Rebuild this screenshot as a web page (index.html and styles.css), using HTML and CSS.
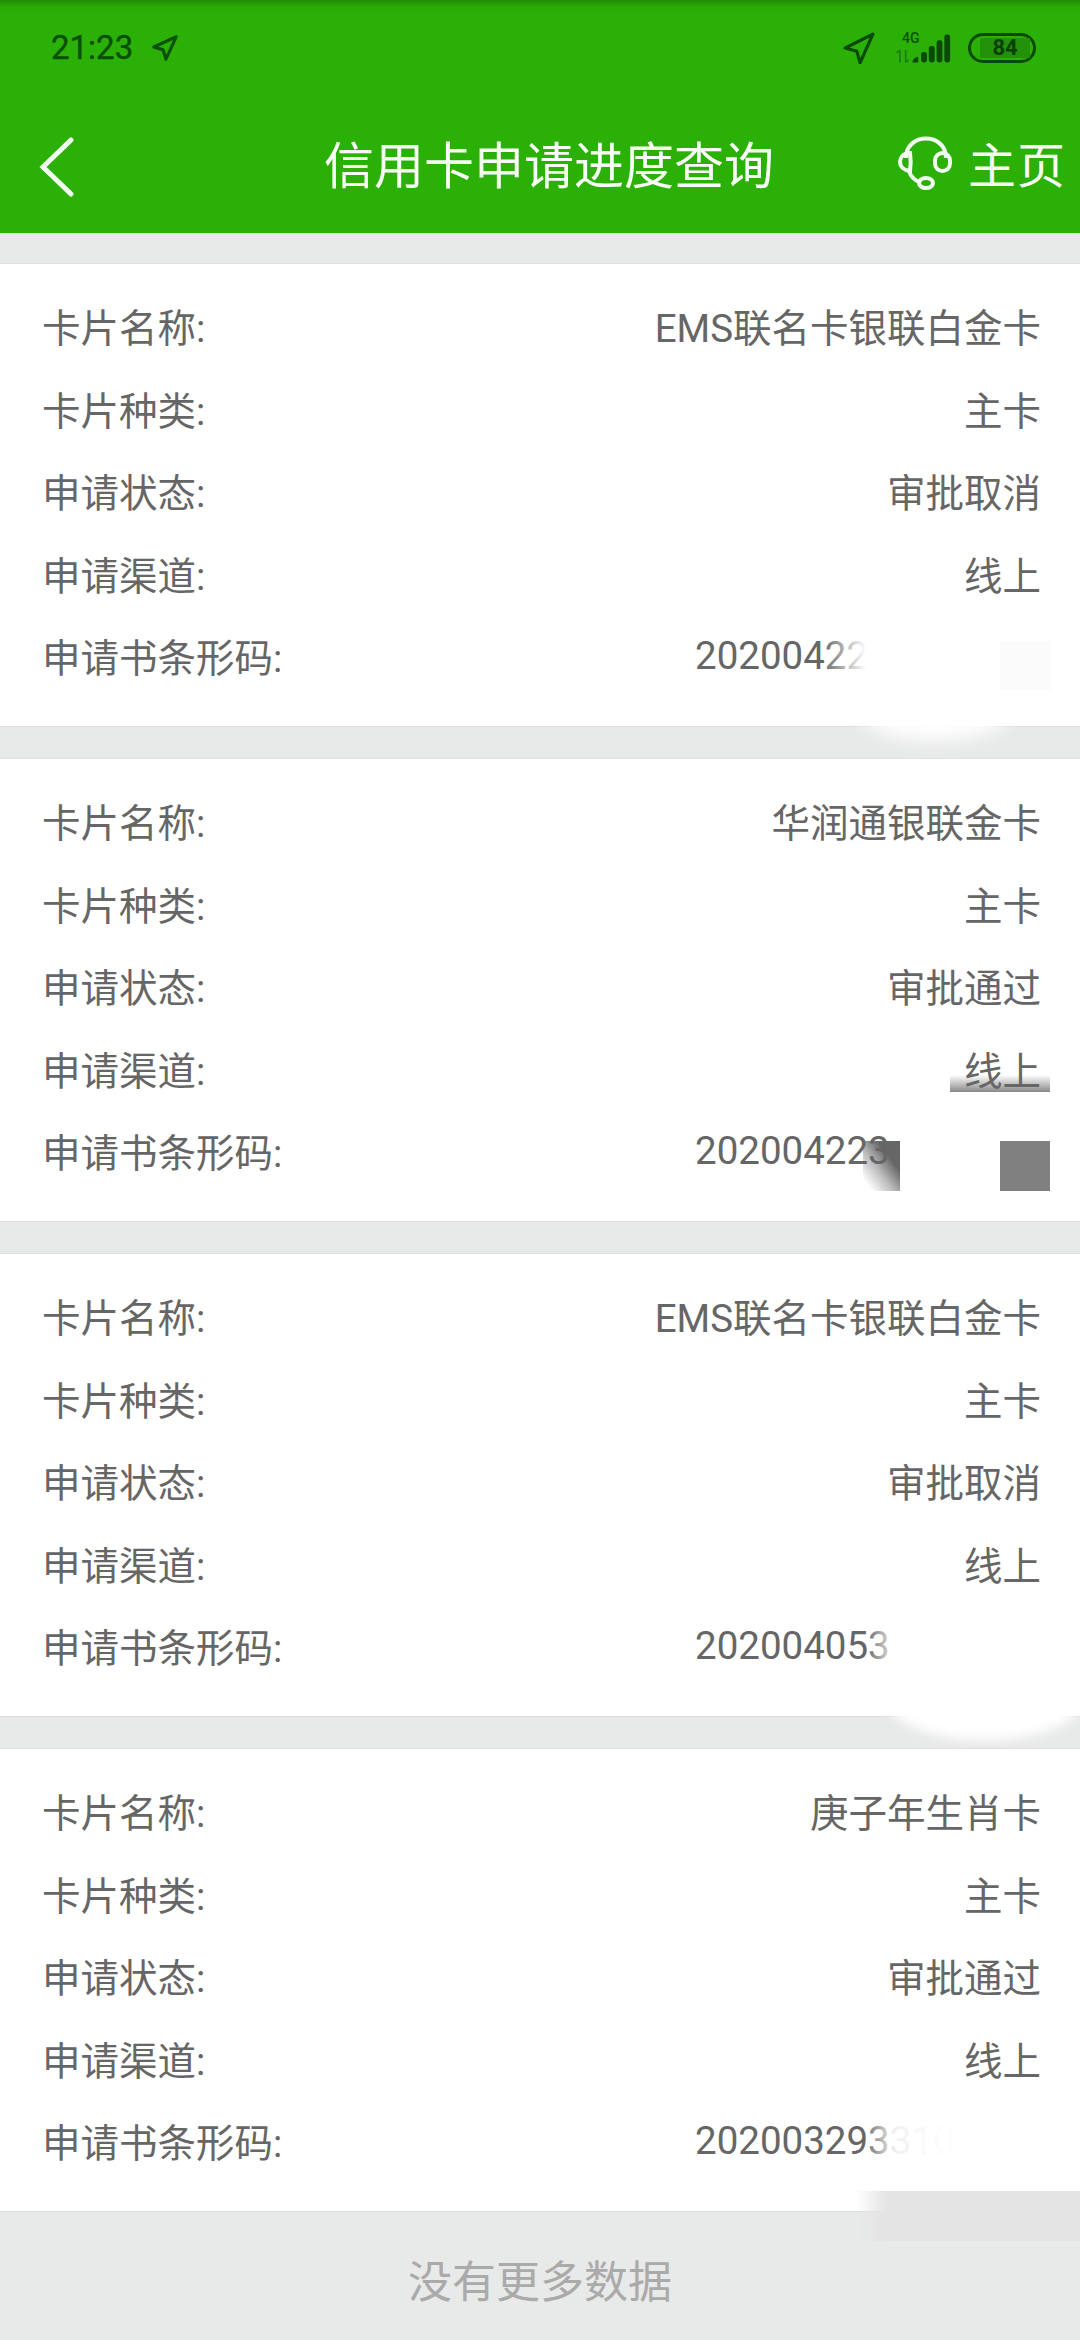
FILE: index.html
```html
<!DOCTYPE html>
<html lang="zh-CN">
<head>
<meta charset="utf-8">
<title>信用卡申请进度查询</title>
<link rel="stylesheet" href="styles.css">
</head>
<body>
<header class="top">
  <div class="status">
    <div class="status-left">
      <span class="time">21:23</span>
      <svg class="loc-small" viewBox="0 0 30 30"><path d="M27 3 L3 14 L13 17 L16 27 Z" fill="none" stroke="#0a5206" stroke-width="3.4" stroke-linejoin="round"/></svg>
    </div>
    <div class="status-right">
      <svg class="loc" viewBox="0 0 30 30"><path d="M28 2 L2 15 L13 18 L16 29 Z" fill="none" stroke="#0a4a06" stroke-width="3" stroke-linejoin="round"/></svg>
      <div class="net">
        <span class="net-label">4G</span>
        <svg class="signal" viewBox="0 0 60 30"><path d="M4 16 V29 M1 19 L4 16 M10 29 V16 M13 26 L10 29" stroke="#1a7a10" stroke-width="1.6" fill="none"/><path d="M17 29 Q17 24 23 23 V29 Z" fill="#0a4a06"/><rect x="26" y="18" width="6" height="11" rx="2.5" fill="#0a4a06"/><rect x="34" y="12" width="6" height="17" rx="2.5" fill="#0a4a06"/><rect x="42" y="6" width="6" height="23" rx="2.5" fill="#0a4a06"/><rect x="50" y="0" width="6" height="29" rx="2.5" fill="#0a4a06"/></svg>
      </div>
      <div class="battery"><span class="battery-fill">84</span></div>
    </div>
  </div>
  <nav class="nav">
    <svg class="back" viewBox="0 0 36 60"><path d="M33 3 L5 30 L33 57" fill="none" stroke="#f2fbf0" stroke-width="5" stroke-linecap="round" stroke-linejoin="miter"/></svg>
    <h1 class="title">信用卡申请进度查询</h1>
    <div class="home">
      <svg class="headset" viewBox="0 0 56 56"><path d="M8 24 C8 -2 48 -2 48 24" fill="none" stroke="#f2fbf0" stroke-width="4"/><rect x="37" y="19" width="15" height="18" rx="7.5" fill="none" stroke="#f2fbf0" stroke-width="4"/><path d="M12 19 C4 19 2 25 2 28 C2 32 5 36 12 37 C13 30 13 25 12 19 Z" fill="none" stroke="#f2fbf0" stroke-width="4"/><path d="M11 37 C13 44 18 47 23 49" fill="none" stroke="#f2fbf0" stroke-width="4"/><ellipse cx="28" cy="49" rx="7" ry="5" fill="none" stroke="#f2fbf0" stroke-width="4"/></svg>
      <span>主页</span>
    </div>
  </nav>
</header>
<main class="list">
  <section class="card">
    <div class="row"><span>卡片名称:</span><span>EMS联名卡银联白金卡</span></div>
    <div class="row"><span>卡片种类:</span><span>主卡</span></div>
    <div class="row"><span>申请状态:</span><span>审批取消</span></div>
    <div class="row"><span>申请渠道:</span><span>线上</span></div>
    <div class="row"><span>申请书条形码:</span><span class="code">20200422</span></div>
    <div class="mask wipe-a"></div>
    <div class="mask blob-a"></div>
    <div class="mask pale-square"></div>
  </section>
  <section class="card">
    <div class="mask strip"></div>
    <div class="mask smear"></div>
    <div class="mask grey-square"></div>
    <div class="row"><span>卡片名称:</span><span>华润通银联金卡</span></div>
    <div class="row"><span>卡片种类:</span><span>主卡</span></div>
    <div class="row"><span>申请状态:</span><span>审批通过</span></div>
    <div class="row"><span>申请渠道:</span><span>线上</span></div>
    <div class="row"><span>申请书条形码:</span><span class="code">202004223</span></div>
  </section>
  <section class="card">
    <div class="row"><span>卡片名称:</span><span>EMS联名卡银联白金卡</span></div>
    <div class="row"><span>卡片种类:</span><span>主卡</span></div>
    <div class="row"><span>申请状态:</span><span>审批取消</span></div>
    <div class="row"><span>申请渠道:</span><span>线上</span></div>
    <div class="row"><span>申请书条形码:</span><span class="code">202004053</span></div>
    <div class="mask wipe-c"></div>
    <div class="mask blob-c"></div>
  </section>
  <section class="card">
    <div class="row"><span>卡片名称:</span><span>庚子年生肖卡</span></div>
    <div class="row"><span>卡片种类:</span><span>主卡</span></div>
    <div class="row"><span>申请状态:</span><span>审批通过</span></div>
    <div class="row"><span>申请渠道:</span><span>线上</span></div>
    <div class="row"><span>申请书条形码:</span><span class="code">202003293310</span></div>
    <div class="mask wipe-d"></div>
    <div class="mask band-d"></div>
  </section>
</main>
<footer class="more">没有更多数据</footer>
</body>
</html>
```

FILE: styles.css
```css
* { box-sizing: border-box; }
html, body { margin: 0; padding: 0; }
body {
  width: 1080px;
  height: 2340px;
  overflow: hidden;
  background: #e8e9e9;
  font-family: "Roboto", "Noto Sans CJK SC", sans-serif;
  color: #666;
}
.top {
  height: 233px;
  background: linear-gradient(to bottom, #1f8a05 0, #2aab08 7px, #2bb008 16px, #2bb008 100%);
}
.status {
  height: 96px;
  padding: 30px 44px 0 51px;
  display: flex;
  justify-content: space-between;
  align-items: flex-start;
}
.status-left { display: flex; align-items: center; gap: 18px; }
.time { font-size: 33px; line-height: 36px; font-weight: 400; color: #0a4f06; -webkit-text-stroke: .4px #0a4f06; }
.loc-small { width: 28px; height: 28px; }
.status-right { display: flex; align-items: center; gap: 22px; padding-top: 2px; }
.loc { width: 32px; height: 32px; margin-right: -1px; }
.net { position: relative; width: 58px; height: 32px; }
.net-label {
  position: absolute; left: 6px; top: -1px;
  font-size: 14px; line-height: 14px; font-weight: 500; color: #0a5206;
}
.signal { position: absolute; left: 0; bottom: 0; width: 58px; height: 30px; }
.battery {
  width: 68px; height: 30px;
  margin-left: -8px;
  border: 3px solid #0a4a06;
  border-radius: 15px;
  padding: 2px 3px;
  display: flex;
}
.battery-fill {
  flex: 1;
  max-width: 52px;
  margin-left: 6px;
  background: #23910a;
  text-align: center;
  font-size: 22px; line-height: 20px; font-weight: 700;
  color: #0a3f06;
}
.nav {
  height: 137px;
  padding: 0 14px 6px 38px;
  display: flex;
  align-items: center;
  justify-content: space-between;
}
.back { width: 36px; height: 60px; position: relative; top: 5px; }
.title {
  margin: 0 0 0 124px;
  font-size: 50px;
  font-weight: 400;
  color: #f7fdf5;
  font-family: "Noto Sans CJK SC", sans-serif;
  white-space: nowrap;
}
.home {
  display: flex;
  align-items: center;
  gap: 14px;
  font-size: 48px;
  color: #f7fdf5;
  font-family: "Noto Sans CJK SC", sans-serif;
}
.home span { letter-spacing: 1px; }
.headset { width: 56px; height: 56px; margin-left: -2px; }
.list { padding-top: 30px; display: flex; flex-direction: column; gap: 31px; }
.card {
  position: relative;
  height: 464px;
  padding: 20px 42px 0;
  background: #fff;
  border-top: 1px solid #dfe0e0;
  border-bottom: 1px solid #dcdddd;
}
.row {
  position: relative;
  height: 82.5px;
  display: flex;
  justify-content: space-between;
  align-items: center;
  font-size: 38.5px;
  white-space: nowrap;
}
.row > span:last-child { margin-right: -3px; }
.row > .code { width: 346px; text-align: left; }
.mask { position: absolute; }
.wipe-a { left: 822px; top: 350px; width: 200px; height: 100px; background: linear-gradient(to right, rgba(255,255,255,0) 0, #fff 44px); }
.blob-a { left: 860px; top: 420px; width: 150px; height: 56px; border-radius: 50%; background: #fff; filter: blur(9px); }
.pale-square { left: 1000px; top: 377px; width: 50px; height: 50px; background: #fbfbfb; }
.strip { left: 950px; top: 316px; width: 100px; height: 17px; background: linear-gradient(to bottom, rgba(140,140,140,0), rgba(130,130,130,.95)); }
.smear { left: 863px; top: 382px; width: 37px; height: 50px; background: linear-gradient(to bottom left, #666 30%, rgba(102,102,102,.45) 58%, rgba(102,102,102,0) 88%); }
.grey-square { left: 1000px; top: 382px; width: 50px; height: 50px; background: #808080; }
.wipe-c { left: 866px; top: 345px; width: 214px; height: 110px; background: linear-gradient(to right, rgba(255,255,255,0) 0, #fff 32px); }
.blob-c { left: 885px; top: 400px; width: 200px; height: 86px; border-radius: 50%; background: #fff; filter: blur(6px); }
.wipe-d { left: 864px; top: 350px; width: 216px; height: 70px; background: linear-gradient(to right, rgba(255,255,255,0) 0, rgba(255,255,255,.9) 30px, rgba(255,255,255,.97) 60px, #fff 100px); }
.band-d { left: 856px; top: 442px; width: 224px; height: 50px; background: linear-gradient(to right, rgba(227,228,227,0) 0, #e3e4e3 30px); }
.more {
  height: 128px;
  padding-top: 6px;
  display: flex;
  align-items: center;
  justify-content: center;
  font-size: 44px;
  color: #aaa;
  font-family: "Noto Sans CJK SC", sans-serif;
}
```
